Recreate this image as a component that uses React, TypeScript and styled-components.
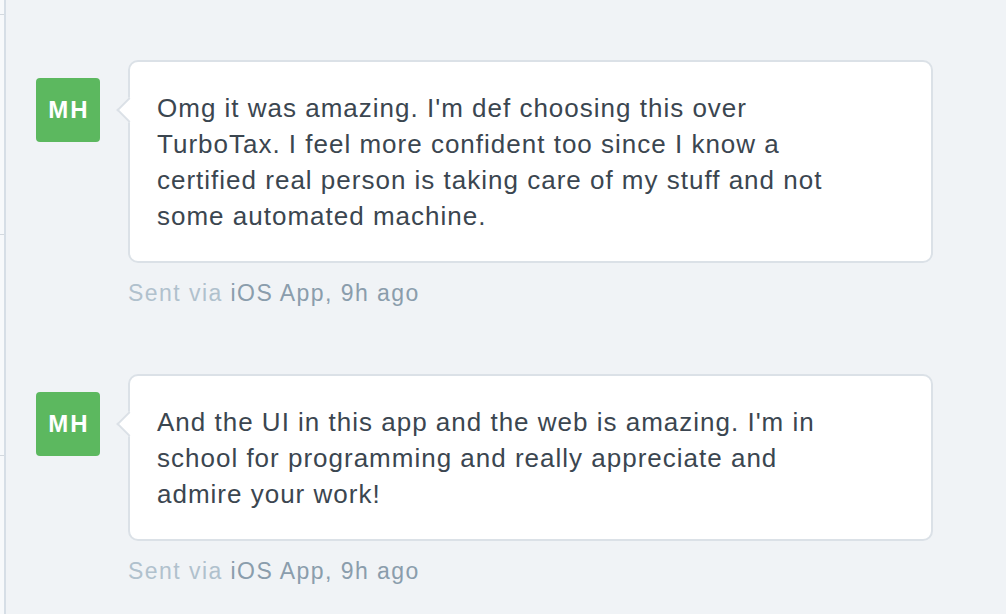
import React from "react";
import styled, { createGlobalStyle } from "styled-components";

const Global = createGlobalStyle`
  html, body { margin: 0; padding: 0; background: #f0f3f6; }
  body { font-family: "Liberation Sans", Arial, Helvetica, sans-serif; -webkit-font-smoothing: antialiased; }
  #root { min-height: 614px; }
`;

const Page = styled.div`
  display: flex;
  min-height: 614px;
  background: #f0f3f6;
`;

const Rail = styled.div`
  width: 4px;
  flex-shrink: 0;
  background: #f7f9fb;
  border-right: 2px solid #d6dee6;
  display: flex;
  flex-direction: column;
`;

const RailSegment = styled.div<{ $h: number }>`
  height: ${(p) => p.$h}px;
  border-bottom: 1px solid #d3d9df;
  flex-shrink: 0;
`;

const Feed = styled.div`
  flex: 1;
  display: flex;
  flex-direction: column;
  padding: 60px 73px 0 30px;
  gap: 68px;
`;

const Message = styled.div`
  display: flex;
  align-items: flex-start;
  gap: 28px;
`;

const Avatar = styled.div`
  width: 64px;
  height: 64px;
  flex-shrink: 0;
  margin-top: 18px;
  border-radius: 4px;
  background: #5cb85f;
  color: #fff;
  font-weight: 700;
  font-size: 24px;
  letter-spacing: 2px;
  padding-left: 2px;
  box-sizing: border-box;
  display: flex;
  align-items: center;
  justify-content: center;
`;

const Body = styled.div`
  flex: 1;
  display: flex;
  flex-direction: column;
`;

const Bubble = styled.div`
  position: relative;
  background: #fff;
  border: 2px solid #dbe1e7;
  border-radius: 10px;
  padding: 28px 28px 27px 27px;
`;

const Arrow = styled.span`
  position: absolute;
  left: -10px;
  top: 39px;
  width: 16px;
  height: 16px;
  background: #fff;
  border-left: 2px solid #dbe1e7;
  border-bottom: 2px solid #dbe1e7;
  transform: rotate(45deg);
`;

const Text = styled.p`
  margin: 0;
  max-width: 690px;
  font-size: 26px;
  line-height: 36px;
  letter-spacing: 1px;
  color: #3b4650;
`;

const Meta = styled.div`
  margin-top: 17px;
  font-size: 23px;
  line-height: 26px;
  letter-spacing: 1.45px;
  color: #8a9dac;
`;

const Via = styled.span`
  color: #b0c1cd;
`;

const messages = [
  "Omg it was amazing. I'm def choosing this over TurboTax. I feel more confident too since I know a certified real person is taking care of my stuff and not some automated machine.",
  "And the UI in this app and the web is amazing. I'm in school for programming and really appreciate and admire your work!",
];

export default function App() {
  return (
    <>
      <Global />
      <Page>
        <Rail>
          <RailSegment $h={14} />
          <RailSegment $h={219} />
          <RailSegment $h={220} />
        </Rail>
        <Feed>
          {messages.map((m, i) => (
            <Message key={i}>
              <Avatar>MH</Avatar>
              <Body>
                <Bubble>
                  <Arrow />
                  <Text>{m}</Text>
                </Bubble>
                <Meta>
                  <Via>Sent via</Via> iOS App, 9h ago
                </Meta>
              </Body>
            </Message>
          ))}
        </Feed>
      </Page>
    </>
  );
}
